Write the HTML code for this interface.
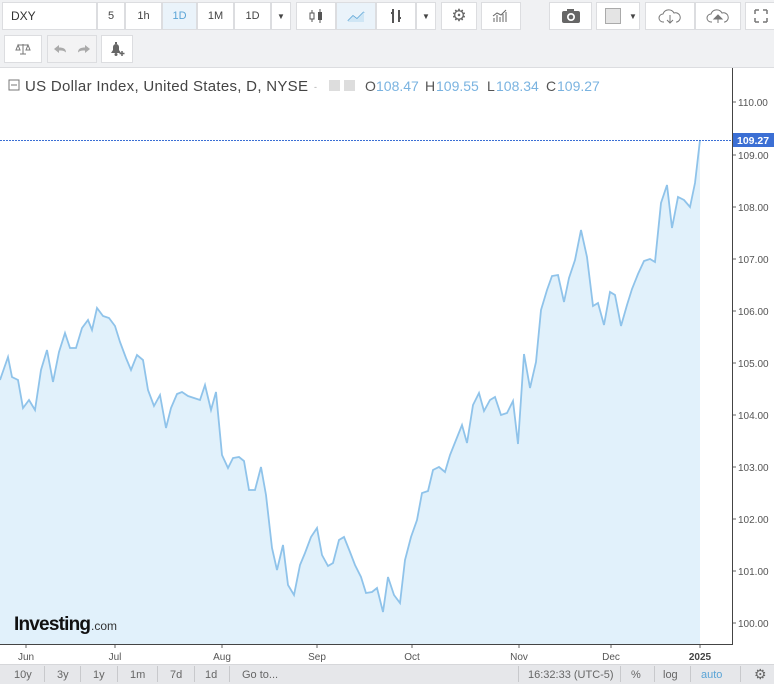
<!DOCTYPE html>
<html><head><meta charset="utf-8"><style>
*{box-sizing:border-box;margin:0;padding:0}
body{width:774px;height:684px;background:#f0f1f3;font-family:"Liberation Sans",sans-serif;position:relative;overflow:hidden;color:#333}
.b{position:absolute;background:#fff;border:1px solid #dcdde0;font-size:11px;color:#444;display:flex;align-items:center;justify-content:center}
.bt{position:absolute;font-size:11px;color:#666;top:669px}
.sep{position:absolute;top:666px;width:1px;height:16px;background:#c8c9cc}
</style></head><body>
<div class="b" style="left:2px;top:2px;width:95px;height:28px;justify-content:flex-start;padding-left:8px;font-size:12px;color:#333">DXY</div>
<div class="b" style="left:97px;top:2px;width:28px;height:28px">5</div>
<div class="b" style="left:125px;top:2px;width:37px;height:28px">1h</div>
<div class="b" style="left:162px;top:2px;width:35px;height:28px;background:#eaf3fa;color:#5aa4d6">1D</div>
<div class="b" style="left:197px;top:2px;width:37px;height:28px">1M</div>
<div class="b" style="left:234px;top:2px;width:37px;height:28px">1D</div>
<div class="b" style="left:271px;top:2px;width:20px;height:28px;font-size:8px">▼</div>
<div class="b" style="left:296px;top:2px;width:40px;height:28px"><svg width="16" height="16"><path d="M4 2v12M12 1v14" stroke="#555"/><rect x="2" y="5" width="4" height="6" fill="#fff" stroke="#555"/><rect x="10" y="4" width="4" height="8" fill="#555"/></svg></div>
<div class="b" style="left:336px;top:2px;width:40px;height:28px;background:#eaf3fa"><svg width="18" height="12"><path d="M1 11l5-5 4 3 7-7" stroke="#5aa4d6" stroke-width="1.5" fill="none"/><path d="M1 11l5-5 4 3 7-7V12H1z" fill="#cfe6f5"/></svg></div>
<div class="b" style="left:376px;top:2px;width:40px;height:28px"><svg width="16" height="16"><path d="M5 1v14M3 5h2M11 2v12M11 10h2" stroke="#555" stroke-width="2"/></svg></div>
<div class="b" style="left:416px;top:2px;width:20px;height:28px;font-size:8px">▼</div>
<div class="b" style="left:441px;top:2px;width:36px;height:28px;font-size:17px;color:#666">⚙</div>
<div class="b" style="left:481px;top:2px;width:40px;height:28px"><svg width="18" height="14"><path d="M2 13V9M5 13V6M8 13V8M11 13V5M14 13V3M1 7l4-3 4 2 5-5" stroke="#666" fill="none"/></svg></div>
<div class="b" style="left:549px;top:2px;width:43px;height:28px"><svg width="20" height="16"><rect x="1" y="3" width="18" height="12" rx="2" fill="#666"/><rect x="6" y="1" width="7" height="3" fill="#666"/><circle cx="10" cy="9" r="4" fill="#fff"/><circle cx="10" cy="9" r="2.3" fill="#666"/></svg></div>
<div class="b" style="left:596px;top:2px;width:44px;height:28px;justify-content:flex-start;padding-left:8px"><div style="width:16px;height:16px;background:#e4e4e4;border:1px solid #aaa"></div><span style="font-size:8px;margin-left:8px">▼</span></div>
<div class="b" style="left:645px;top:2px;width:50px;height:28px"><svg width="24" height="18"><path d="M6 15H5a4 4 0 010-8 6 6 0 0111-1 4.5 4.5 0 013 9h-1" stroke="#777" fill="none"/><path d="M12 8v8M9 13l3 3 3-3" stroke="#777" fill="none"/></svg></div>
<div class="b" style="left:695px;top:2px;width:46px;height:28px"><svg width="24" height="18"><path d="M6 15H5a4 4 0 010-8 6 6 0 0111-1 4.5 4.5 0 013 9h-1" stroke="#777" fill="none"/><path d="M12 16V9M8 12l4-4 4 4z" stroke="#777" fill="#777"/></svg></div>
<div class="b" style="left:745px;top:2px;width:32px;height:28px"><svg width="14" height="14"><path d="M1 1h4M1 1v4M13 1h-4M13 1v4M1 13h4M1 13v-4M13 13h-4M13 13v-4" stroke="#777" stroke-width="1.5"/></svg></div>
<div class="b" style="left:4px;top:35px;width:38px;height:28px"><svg width="16" height="12"><path d="M8 1v10M3 2h10M3 2l-2 5h4zM13 2l-2 5h4zM5 11h6" stroke="#777" fill="none"/></svg></div>
<div class="b" style="left:47px;top:35px;width:50px;height:28px;background:#f3f3f4;justify-content:space-around"><svg width="14" height="10"><path d="M1 5l5-4v2.5c4 0 7 1 7 5-2-2-4-2-7-2V9z" fill="#aaa"/></svg><svg width="14" height="10"><path d="M13 5l-5-4v2.5c-4 0-7 1-7 5 2-2 4-2 7-2V9z" fill="#aaa"/></svg></div>
<div class="b" style="left:101px;top:35px;width:32px;height:28px"><svg width="18" height="16"><path d="M3 12h10l-2-3V6a3 3 0 00-6 0v3z" fill="#666"/><rect x="7" y="1" width="2" height="2" fill="#666"/><circle cx="8" cy="13.5" r="1.5" fill="#666"/><path d="M14 10v5M11.5 12.5h5" stroke="#666" stroke-width="1.5"/></svg></div>
<div style="position:absolute;left:0;top:67px;width:774px;height:597px;background:#fff;border-top:1px solid #dcdde0"></div>
<svg style="position:absolute;left:0;top:0" width="774" height="684">
<polygon fill="#e1f1fb" points="0,380 8,357 12,377 18,380 23,408 29,400 35,410 41,370 47,350 53,382 59,352 65,333 70,348 76,348 82,328 88,320 92,330 97,308 103,316 109,318 115,326 120,342 126,358 131,370 137,355 143,360 148,390 154,406 160,395 166,428 171,408 177,394 182,392 188,396 194,398 200,400 205,385 211,410 216,392 222,455 228,468 233,458 239,457 244,461 249,490 255,490 261,467 266,495 272,548 277,570 283,545 288,585 294,595 300,565 305,553 311,537 317,528 322,555 328,566 333,563 339,540 344,537 350,552 355,565 361,577 366,593 372,592 377,588 383,612 388,577 394,595 400,603 405,560 411,537 417,520 422,493 428,491 433,470 439,467 445,472 450,455 456,440 462,425 467,443 473,405 479,393 484,411 490,400 495,397 501,415 507,413 513,401 518,444 524,354 530,388 536,362 541,310 547,290 552,276 558,275 564,302 569,278 575,260 581,230 587,257 593,306 598,303 604,325 610,292 615,295 621,326 627,305 632,289 638,274 644,261 650,259 655,262 661,203 667,185 672,228 678,197 684,200 690,207 695,183 700,140 700,644 0,644"/>
<polyline fill="none" stroke="#8fc3ea" stroke-width="1.8" points="0,380 8,357 12,377 18,380 23,408 29,400 35,410 41,370 47,350 53,382 59,352 65,333 70,348 76,348 82,328 88,320 92,330 97,308 103,316 109,318 115,326 120,342 126,358 131,370 137,355 143,360 148,390 154,406 160,395 166,428 171,408 177,394 182,392 188,396 194,398 200,400 205,385 211,410 216,392 222,455 228,468 233,458 239,457 244,461 249,490 255,490 261,467 266,495 272,548 277,570 283,545 288,585 294,595 300,565 305,553 311,537 317,528 322,555 328,566 333,563 339,540 344,537 350,552 355,565 361,577 366,593 372,592 377,588 383,612 388,577 394,595 400,603 405,560 411,537 417,520 422,493 428,491 433,470 439,467 445,472 450,455 456,440 462,425 467,443 473,405 479,393 484,411 490,400 495,397 501,415 507,413 513,401 518,444 524,354 530,388 536,362 541,310 547,290 552,276 558,275 564,302 569,278 575,260 581,230 587,257 593,306 598,303 604,325 610,292 615,295 621,326 627,305 632,289 638,274 644,261 650,259 655,262 661,203 667,185 672,228 678,197 684,200 690,207 695,183 700,140"/>
<line x1="0" y1="140.5" x2="732" y2="140.5" stroke="#3b6fd4" stroke-dasharray="2,1"/>
<line x1="732.5" y1="68" x2="732.5" y2="645" stroke="#444"/>
<line x1="0" y1="644.5" x2="733" y2="644.5" stroke="#444"/>
<g stroke="#666">
<line x1="733" y1="102" x2="736" y2="102"/><line x1="733" y1="155" x2="736" y2="155"/><line x1="733" y1="207" x2="736" y2="207"/><line x1="733" y1="259" x2="736" y2="259"/><line x1="733" y1="311" x2="736" y2="311"/><line x1="733" y1="363" x2="736" y2="363"/><line x1="733" y1="415" x2="736" y2="415"/><line x1="733" y1="467" x2="736" y2="467"/><line x1="733" y1="519" x2="736" y2="519"/><line x1="733" y1="571" x2="736" y2="571"/><line x1="733" y1="623" x2="736" y2="623"/>
<line x1="26" y1="645" x2="26" y2="648"/><line x1="115" y1="645" x2="115" y2="648"/><line x1="222" y1="645" x2="222" y2="648"/><line x1="317" y1="645" x2="317" y2="648"/><line x1="412" y1="645" x2="412" y2="648"/><line x1="519" y1="645" x2="519" y2="648"/><line x1="611" y1="645" x2="611" y2="648"/><line x1="700" y1="645" x2="700" y2="648"/>
</g>
<g font-family="Liberation Sans" font-size="10" fill="#555">
<text x="738" y="106">110.00</text><text x="738" y="159">109.00</text><text x="738" y="211">108.00</text><text x="738" y="263">107.00</text><text x="738" y="315">106.00</text><text x="738" y="367">105.00</text><text x="738" y="419">104.00</text><text x="738" y="471">103.00</text><text x="738" y="523">102.00</text><text x="738" y="575">101.00</text><text x="738" y="627">100.00</text>
<text x="26" y="660" text-anchor="middle">Jun</text><text x="115" y="660" text-anchor="middle">Jul</text><text x="222" y="660" text-anchor="middle">Aug</text><text x="317" y="660" text-anchor="middle">Sep</text><text x="412" y="660" text-anchor="middle">Oct</text><text x="519" y="660" text-anchor="middle">Nov</text><text x="611" y="660" text-anchor="middle">Dec</text><text x="700" y="660" text-anchor="middle" font-weight="bold" fill="#444">2025</text>
</g>
<rect x="733" y="133" width="41" height="14" fill="#3b6fd4"/>
<text x="737" y="144" font-family="Liberation Sans" font-size="10.5" font-weight="bold" fill="#fff">109.27</text>
<text x="14" y="630" font-family="Liberation Sans" font-size="19" font-weight="bold" fill="#111" letter-spacing="-1" textLength="76">Investing</text>
<text x="91" y="630" font-family="Liberation Sans" font-size="12" fill="#333">.com</text>
<rect x="9" y="80" width="10" height="10" fill="none" stroke="#777"/><line x1="11" y1="85" x2="17" y2="85" stroke="#777"/>
<text x="25" y="91" font-family="Liberation Sans" font-size="15" fill="#444" textLength="283">US Dollar Index, United States, D, NYSE</text>
<text x="314" y="90" font-size="9" fill="#aaa">-</text>
<rect x="329" y="80" width="11" height="11" fill="#ddd"/><rect x="344" y="80" width="11" height="11" fill="#ddd"/>
<g font-family="Liberation Sans" font-size="14">
<text x="365" y="91" fill="#555">O</text><text x="376" y="91" fill="#7ab3e0">108.47</text>
<text x="425" y="91" fill="#555">H</text><text x="436" y="91" fill="#7ab3e0">109.55</text>
<text x="487" y="91" fill="#555">L</text><text x="496" y="91" fill="#7ab3e0">108.34</text>
<text x="546" y="91" fill="#555">C</text><text x="557" y="91" fill="#7ab3e0">109.27</text>
</g>
</svg>
<div style="position:absolute;left:0;top:664px;width:774px;height:20px;background:#e6e7ea;border-top:1px solid #d6d7da"></div>
<span class="bt" style="left:14px">10y</span><div class="sep" style="left:44px"></div>
<span class="bt" style="left:57px">3y</span><div class="sep" style="left:80px"></div>
<span class="bt" style="left:93px">1y</span><div class="sep" style="left:117px"></div>
<span class="bt" style="left:130px">1m</span><div class="sep" style="left:157px"></div>
<span class="bt" style="left:170px">7d</span><div class="sep" style="left:194px"></div>
<span class="bt" style="left:205px">1d</span><div class="sep" style="left:229px"></div>
<span class="bt" style="left:242px">Go to...</span>
<div class="sep" style="left:518px"></div><span class="bt" style="left:528px">16:32:33 (UTC-5)</span>
<div class="sep" style="left:620px"></div><span class="bt" style="left:631px">%</span>
<div class="sep" style="left:654px"></div><span class="bt" style="left:663px">log</span>
<div class="sep" style="left:690px"></div><span class="bt" style="left:701px;color:#5aa4d6">auto</span>
<div class="sep" style="left:740px"></div><span class="bt" style="left:754px;top:666px;font-size:14px">⚙</span>
</body></html>
